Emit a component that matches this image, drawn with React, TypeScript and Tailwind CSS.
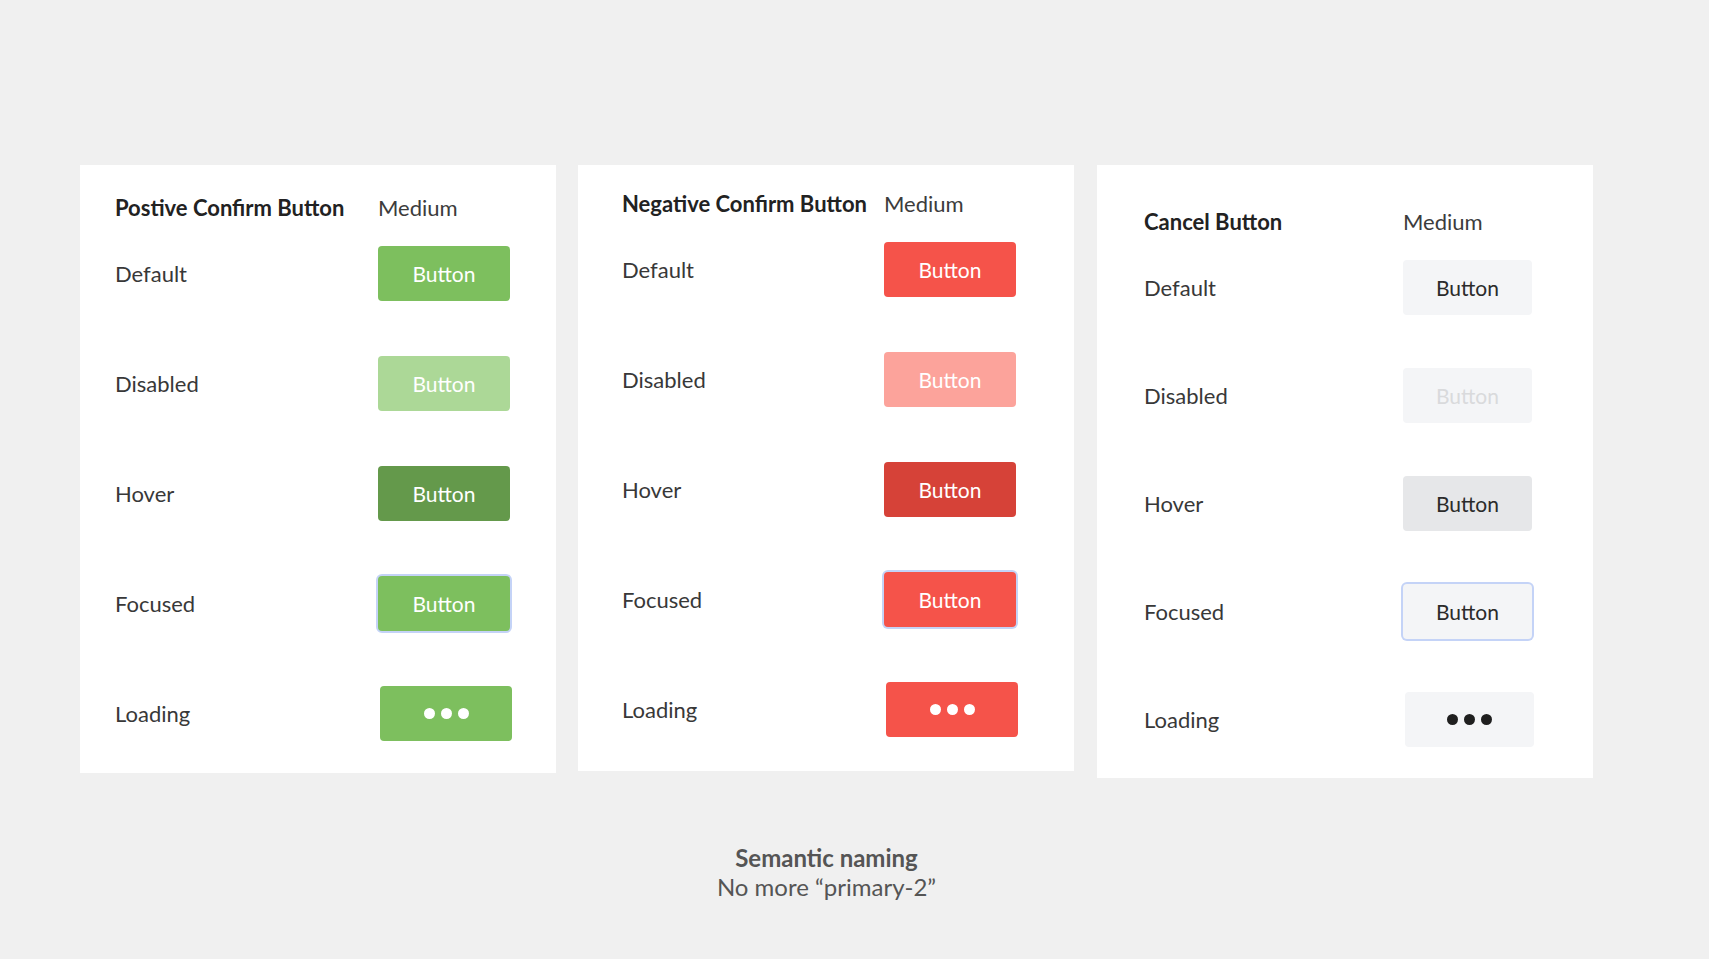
import React from 'react';

type Variant = 'positive' | 'negative' | 'cancel';

const styles: Record<Variant, { normal: string; disabled: string; hover: string; dot: string }> = {
  positive: {
    normal: 'bg-[#7dbf5e] text-white',
    disabled: 'bg-[#acd897] text-white',
    hover: 'bg-[#64994b] text-white',
    dot: 'bg-white',
  },
  negative: {
    normal: 'bg-[#f5534a] text-white',
    disabled: 'bg-[#fca39b] text-white',
    hover: 'bg-[#d64238] text-white',
    dot: 'bg-white',
  },
  cancel: {
    normal: 'bg-[#f4f5f7] text-[#2b2b2b]',
    disabled: 'bg-[#f4f5f7] text-[#d9dadc]',
    hover: 'bg-[#e6e7e9] text-[#2b2b2b]',
    dot: 'bg-[#1f1f1f]',
  },
};

const states = ['Default', 'Disabled', 'Hover', 'Focused', 'Loading'];

const DemoButton: React.FC<{ variant: Variant; state: string; width: string }> = ({ variant, state, width }) => {
  const s = styles[variant];
  let cls = s.normal;
  if (state === 'Disabled') cls = s.disabled;
  if (state === 'Hover') cls = s.hover;
  const focus = state === 'Focused' ? 'ring-2 ring-[#c4d3f7]' : '';
  const offset = state === 'Loading' ? 'ml-[2px]' : '';

  return (
    <div className={`${width} h-[55px] rounded-[4px] flex items-center justify-center text-[21px] ${cls} ${focus} ${offset}`}>
      {state === 'Loading' ? (
        <div className="flex items-center gap-[6px]">
          <span className={`w-[11px] h-[11px] rounded-full ${s.dot}`} />
          <span className={`w-[11px] h-[11px] rounded-full ${s.dot}`} />
          <span className={`w-[11px] h-[11px] rounded-full ${s.dot}`} />
        </div>
      ) : (
        'Button'
      )}
    </div>
  );
};

const Card: React.FC<{
  title: string;
  variant: Variant;
  cardClass: string;
  labelCol: string;
  rowGap: string;
  btnWidth: string;
}> = ({ title, variant, cardClass, labelCol, rowGap, btnWidth }) => (
  <div className={`bg-white ${cardClass}`}>
    <div className="flex items-center h-[28px] mb-[25px]">
      <div className={`${labelCol} font-bold text-[#222] text-[22px]`}>{title}</div>
      <div className="text-[22px] text-[#3c3c3c]">Medium</div>
    </div>
    <div className={`flex flex-col ${rowGap}`}>
      {states.map((state) => (
        <div key={state} className="flex items-center h-[55px]">
          <div className={`${labelCol} text-[22px] text-[#383838]`}>{state}</div>
          <DemoButton variant={variant} state={state} width={btnWidth} />
        </div>
      ))}
    </div>
  </div>
);

const App: React.FC = () => {
  return (
    <div className="min-h-screen bg-[#f0f0f0] pt-[165px] pl-[80px] font-['Lato',sans-serif]">
      <div className="flex items-start">
        <Card
          title="Postive Confirm Button"
          variant="positive"
          cardClass="w-[476px] pl-[35px] pt-[28px] pb-[32px]"
          labelCol="w-[263px]"
          rowGap="gap-[55px]"
          btnWidth="w-[132px]"
        />
        <div className="ml-[22px]">
          <Card
            title="Negative Confirm Button"
            variant="negative"
            cardClass="w-[496px] pl-[44px] pt-[24px] pb-[34px]"
            labelCol="w-[262px]"
            rowGap="gap-[55px]"
            btnWidth="w-[132px]"
          />
        </div>
        <div className="ml-[23px]">
          <Card
            title="Cancel Button"
            variant="cancel"
            cardClass="w-[496px] pl-[47px] pt-[42px] pb-[31px]"
            labelCol="w-[259px]"
            rowGap="gap-[53px]"
            btnWidth="w-[129px]"
          />
        </div>
      </div>

      {/* Caption */}
      <div className="w-[1513px] pr-[20px] mt-[65px] flex flex-col items-center text-[#555] text-[24px] leading-[29px]">
        <div className="font-bold">Semantic naming</div>
        <div>No more “primary-2”</div>
      </div>
    </div>
  );
};

export default App;
